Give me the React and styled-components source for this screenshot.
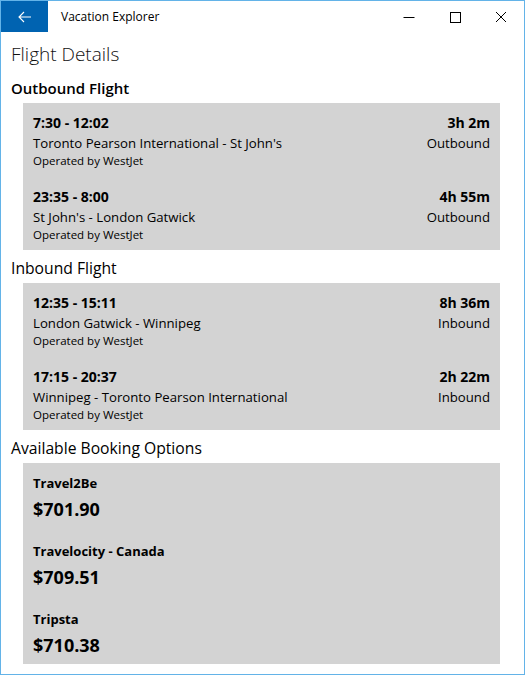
import styled, { createGlobalStyle } from 'styled-components';

const GlobalStyle = createGlobalStyle`
  html, body {
    margin: 0;
    padding: 0;
    background: #ffffff;
  }
  body {
    font-family: "Segoe UI", "Open Sans", "Noto Sans", sans-serif;
    color: #000000;
  }
`;

const outbound = [
  { times: '7:30 - 12:02', route: 'Toronto Pearson International - St John\'s', carrier: 'WestJet', duration: '3h 2m', dir: 'Outbound' },
  { times: '23:35 - 8:00', route: 'St John\'s - London Gatwick', carrier: 'WestJet', duration: '4h 55m', dir: 'Outbound' },
];

const inbound = [
  { times: '12:35 - 15:11', route: 'London Gatwick - Winnipeg', carrier: 'WestJet', duration: '8h 36m', dir: 'Inbound' },
  { times: '17:15 - 20:37', route: 'Winnipeg - Toronto Pearson International', carrier: 'WestJet', duration: '2h 22m', dir: 'Inbound' },
];

const offers = [
  { site: 'Travel2Be', price: '$701.90' },
  { site: 'Travelocity - Canada', price: '$709.51' },
  { site: 'Tripsta', price: '$710.38' },
];

function FlightList({ flights }) {
  return (
    <Panel>
      {flights.map((f) => (
        <FlightRow key={f.times}>
          <div>
            <Times>{f.times}</Times>
            <Route>{f.route}</Route>
            <Operator>Operated by {f.carrier}</Operator>
          </div>
          <RightCol>
            <Times>{f.duration}</Times>
            <Route>{f.dir}</Route>
          </RightCol>
        </FlightRow>
      ))}
    </Panel>
  );
}

function App() {
  return (
    <Window>
      <GlobalStyle />
      <TitleBar>
        <BackButton aria-label="Back">
          <svg width="14" height="12" viewBox="0 0 14 12">
            <path d="M1 6 H13 M6 1 L1 6 L6 11" stroke="#fff" strokeWidth="1.1" fill="none" />
          </svg>
        </BackButton>
        <AppName>Vacation Explorer</AppName>
        <Caption>
          <CaptionButton>
            <svg width="12" height="12" viewBox="0 0 12 12">
              <path d="M0.5 6.5 H11.5" stroke="#000" strokeWidth="1" />
            </svg>
          </CaptionButton>
          <CaptionButton>
            <svg width="12" height="12" viewBox="0 0 12 12">
              <rect x="1.5" y="1.5" width="10" height="10" stroke="#000" strokeWidth="1" fill="none" />
            </svg>
          </CaptionButton>
          <CaptionButton>
            <svg width="12" height="12" viewBox="0 0 12 12">
              <path d="M1 1 L11 11 M11 1 L1 11" stroke="#000" strokeWidth="1" />
            </svg>
          </CaptionButton>
        </Caption>
      </TitleBar>

      <Content>
        <PageTitle>Flight Details</PageTitle>

        <SectionTitle $strong>Outbound Flight</SectionTitle>
        <FlightList flights={outbound} />

        <SectionTitle>Inbound Flight</SectionTitle>
        <FlightList flights={inbound} />

        <SectionTitle>Available Booking Options</SectionTitle>
        <OffersPanel>
          {offers.map((o) => (
            <Offer key={o.site}>
              <Site>{o.site}</Site>
              <Price>{o.price}</Price>
            </Offer>
          ))}
        </OffersPanel>
      </Content>
    </Window>
  );
}

export default App;

const Window = styled.div`
  box-sizing: border-box;
  width: 525px;
  height: 675px;
  border: 1px solid #63b3e8;
  display: flex;
  flex-direction: column;
  overflow: hidden;
`;

const TitleBar = styled.div`
  height: 31px;
  display: flex;
  align-items: center;
  flex-shrink: 0;
`;

const BackButton = styled.div`
  width: 47px;
  height: 31px;
  background: #0063b1;
  display: flex;
  align-items: center;
  justify-content: center;
`;

const AppName = styled.div`
  margin-left: 13px;
  font-size: 12px;
  flex: 1;
`;

const Caption = styled.div`
  display: flex;
  height: 31px;
`;

const CaptionButton = styled.div`
  width: 46px;
  height: 31px;
  display: flex;
  align-items: center;
  justify-content: center;
`;

const Content = styled.div`
  padding: 8px 24px 0 10px;
`;

const PageTitle = styled.div`
  font-size: 19px;
  font-weight: 300;
  line-height: 28px;
  color: #111;
`;

const SectionTitle = styled.div`
  margin-top: ${(p) => (p.$strong ? '10px' : '8px')};
  margin-bottom: 5px;
  font-size: ${(p) => (p.$strong ? '15px' : '15.7px')};
  line-height: 20px;
  font-weight: ${(p) => (p.$strong ? 600 : 400)};
`;

const Panel = styled.div`
  margin-left: 12px;
  background: #d3d3d3;
  padding: 10px 10px 7px;
  display: flex;
  flex-direction: column;
  gap: 18px;
`;

const FlightRow = styled.div`
  display: flex;
  justify-content: space-between;
`;

const RightCol = styled.div`
  text-align: right;
`;

const Times = styled.div`
  font-size: 14px;
  font-weight: 700;
  line-height: 20px;
`;

const Route = styled.div`
  font-size: 13.2px;
  line-height: 20px;
`;

const Operator = styled.div`
  font-size: 11.5px;
  line-height: 16px;
`;

const OffersPanel = styled.div`
  margin-left: 12px;
  background: #d3d3d3;
  padding: 11px 10px 5px;
  display: flex;
  flex-direction: column;
  gap: 19px;
`;

const Offer = styled.div`
  display: flex;
  flex-direction: column;
  gap: 3px;
`;

const Site = styled.div`
  font-size: 13px;
  font-weight: 700;
  line-height: 18px;
`;

const Price = styled.div`
  font-size: 18px;
  font-weight: 700;
  line-height: 28px;
`;
